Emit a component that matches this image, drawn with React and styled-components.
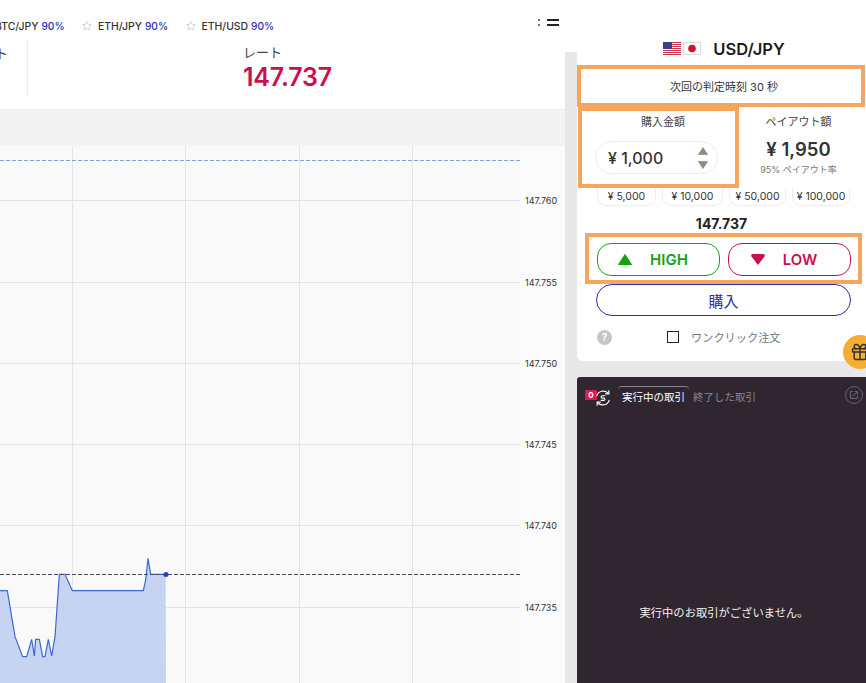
import React from 'react';
import styled, { createGlobalStyle } from 'styled-components';
import { Gift, Star } from 'lucide-react';

const GlobalStyle = createGlobalStyle`
  html, body { margin: 0; padding: 0; background: #fff; }
  body { font-family: Inter, "Noto Sans CJK JP", sans-serif; color: #2b2b2b; }
  * { box-sizing: border-box; }
`;

const ORANGE = '#f5a55c';
const BLUE = '#2a2fb0';
const GREEN = '#12a312';
const RED = '#c8114f';

const pairs = [
  { name: 'BTC/JPY', rate: '90%' },
  { name: 'ETH/JPY', rate: '90%', star: true },
  { name: 'ETH/USD', rate: '90%', star: true },
];
const chips = ['¥ 5,000', '¥ 10,000', '¥ 50,000', '¥ 100,000'];
const ticks = [
  { y: 54.5, label: '147.760' },
  { y: 136.5, label: '147.755' },
  { y: 217.5, label: '147.750' },
  { y: 298.5, label: '147.745' },
  { y: 379.5, label: '147.740' },
  { y: 461.5, label: '147.735' },
];
const vLines = [72.5, 185.5, 299.5, 412.5];

const raw = [[0,152],[22,152],[45,290],[68,350],[80,350],[95,298],[103,348],[107,298],[118,298],[128,350],[135,350],[145,298],[155,348],[165,290],[178,103],[195,103],[217,152],[430,152],[437,120],[444,55],[452,103],[497,103]];
// zoomed crop coords to svg coords (chart starts at y=146)
const pts = raw.map(([x, y]) => [x / 3, 540 + y / 3 - 146]);
const line = pts.map(p => p.join(',')).join(' ');
const area = `0,537 ${line} 166,537`;

const Page = styled.div`
  width: 866px;
  height: 683px;
  display: flex;
  overflow: hidden;
`;
const Main = styled.div`
  width: 565px;
  display: flex;
  flex-direction: column;
`;
const Ticker = styled.div`
  height: 40px;
  padding: 19px 6px 0 0;
  display: flex;
  align-items: flex-start;
  justify-content: space-between;
  overflow: hidden;
`;
const Pairs = styled.div`
  display: flex;
  margin-left: -5px;
`;
const Pair = styled.div`
  display: flex;
  align-items: center;
  height: 14px;
  font-size: 10.4px;
  font-weight: 500;
  white-space: nowrap;
  margin-right: 17.5px;
  color: #333;
  svg { margin-right: 6px; color: #b5b5b5; }
  b { font-weight: 500; font-size: 10.2px; color: ${BLUE}; margin-left: 3px; }
`;
const MenuIcons = styled.div`
  display: flex;
  align-items: center;
  gap: 7px;
`;
const Dots = styled.span`
  display: flex;
  flex-direction: column;
  gap: 3px;
  i { width: 2px; height: 2px; border-radius: 50%; background: #444; }
`;
const Bars = styled.span`
  display: flex;
  flex-direction: column;
  gap: 3px;
  i { width: 12px; height: 2px; background: #222; }
`;
const InfoRow = styled.div`
  height: 70px;
  display: flex;
  border-bottom: 1px solid #ececec;
`;
const ClippedCol = styled.div`
  width: 28px;
  height: 56px;
  border-right: 1px solid #ececec;
  display: flex;
  justify-content: flex-end;
  padding: 3px 19px 0 0;
  font-size: 13px;
  color: #444;
  white-space: nowrap;
`;
const RateCol = styled.div`
  padding: 2px 0 0 215px;
`;
const RateLabel = styled.div`
  font-size: 13px;
  line-height: 20px;
  color: #444;
`;
const RateValue = styled.div`
  font-size: 25px;
  line-height: 30px;
  font-weight: 600;
  letter-spacing: -0.2px;
  color: ${RED};
`;
const Band = styled.div`
  height: 36px;
  background: #f3f3f3;
`;
const ChartWrap = styled.div`
  flex: 1;
  background: #f9f9f9;
  svg { display: block; }
`;

const Side = styled.div`
  width: 301px;
  padding-left: 12px;
  background: linear-gradient(#fff 52px, #e8e8e8 52px);
  display: flex;
  flex-direction: column;
`;
const Panel = styled.div`
  position: relative;
  height: 361px;
  background: #fff;
  border-bottom-left-radius: 6px;
  display: flex;
  flex-direction: column;
`;
const PairHead = styled.div`
  height: 65px;
  padding: 39px 0 0 5px;
  display: flex;
  justify-content: center;
  align-items: flex-start;
  gap: 2px;
  font-size: 16.5px;
  font-weight: 600;
  line-height: 20px;
  color: #1c1c1c;
  span { margin-left: 10px; }
  svg { margin-top: 3px; }
`;
const TimerBox = styled.div`
  width: 288px;
  height: 42px;
  padding-left: 6px;
  border: 4px solid ${ORANGE};
  display: flex;
  align-items: center;
  justify-content: center;
  font-size: 11px;
  color: #333;
`;
const AmountRow = styled.div`
  display: flex;
  height: 81px;
`;
const AmountBox = styled.div`
  width: 161px;
  margin-left: 1px;
  border: 4px solid ${ORANGE};
  padding: 3px 0 0 13px;
  display: flex;
  flex-direction: column;
`;
const SmallHead = styled.div`
  font-size: 11px;
  line-height: 16px;
  text-align: center;
  color: #444;
`;
const AmountLabel = styled(SmallHead)`
  padding-right: 4px;
`;
const AmountInput = styled.div`
  margin-top: 11px;
  width: 123px;
  height: 33px;
  border: 1px solid #ececec;
  border-radius: 17px;
  display: flex;
  align-items: center;
  justify-content: space-between;
  padding: 0 9px 0 12px;
  font-size: 16px;
  font-weight: 500;
  color: #333;
`;
const Arrows = styled.span`
  display: flex;
  flex-direction: column;
  gap: 6px;
`;
const Payout = styled.div`
  flex: 1;
  padding: 7px 8px 0 0;
  display: flex;
  flex-direction: column;
  align-items: center;
`;
const PayoutValue = styled.div`
  margin-top: 8px;
  font-size: 18.5px;
  line-height: 22px;
  font-weight: 600;
  color: #333;
`;
const PayoutNote = styled.div`
  font-size: 9px;
  line-height: 14px;
  margin-top: 3px;
  color: #777;
`;
const Chips = styled.div`
  display: flex;
  gap: 6px;
  padding-left: 20px;
`;
const Chip = styled.div`
  height: 18px;
  padding: 0 6px;
  border: 1px solid #eee;
  border-top: 0;
  border-radius: 0 0 9px 9px;
  display: flex;
  align-items: center;
  justify-content: center;
  white-space: nowrap;
  font-size: 10.5px;
  color: #333;
  width: ${p => p.$w}px;
`;
const Quote = styled.div`
  margin-top: 8px;
  height: 19px;
  text-align: center;
  font-size: 14px;
  line-height: 20px;
  font-weight: 700;
  color: #222;
`;
const TradeBox = styled.div`
  margin: 0 0 0 8px;
  width: 277px;
  height: 51px;
  border: 4px solid ${ORANGE};
  display: flex;
  gap: 8px;
  padding: 6px 7px 0 8px;
`;
const TradeButton = styled.div`
  flex: 1;
  height: 33px;
  border: 1px solid ${p => p.$color};
  border-radius: 14px;
  color: ${p => p.$color};
  font-size: 15px;
  font-weight: 600;
  display: flex;
  align-items: center;
  justify-content: center;
  gap: 18px;
  padding-right: 7px;
  svg { margin-left: -4px; }
`;
const BuyButton = styled.div`
  margin: 0 15px 0 19px;
  height: 32px;
  border: 1px solid ${BLUE};
  border-radius: 16px;
  color: ${BLUE};
  font-size: 15px;
  font-weight: 400;
  display: flex;
  align-items: center;
  justify-content: center;
`;
const OneClick = styled.div`
  margin-top: 13px;
  padding-left: 20px;
  height: 16px;
  display: flex;
  align-items: center;
  font-size: 11.2px;
  color: #777;
`;
const Help = styled.span`
  width: 15px;
  height: 15px;
  border-radius: 50%;
  background: #c6c6c6;
  color: #fff;
  font-size: 10px;
  font-weight: 700;
  display: flex;
  align-items: center;
  justify-content: center;
`;
const Check = styled.span`
  width: 12px;
  height: 12px;
  margin: 0 12px 0 55px;
  border: 1.5px solid #222;
`;
const GiftBadge = styled.div`
  position: absolute;
  left: 266px;
  top: 335px;
  width: 34px;
  height: 34px;
  border-radius: 50%;
  background: #f5ae33;
  color: #333;
  display: flex;
  align-items: center;
  justify-content: center;
`;
const Dark = styled.div`
  margin-top: 16px;
  flex: 1;
  background: #2f2630;
  border-radius: 3px 0 0 0;
  display: flex;
  flex-direction: column;
  color: #fff;
`;
const DarkHead = styled.div`
  height: 34px;
  padding: 9px 0 0 8px;
  display: flex;
  align-items: flex-start;
`;
const Count = styled.span`
  width: 12px;
  height: 10px;
  margin-top: 4px;
  background: #d81b52;
  font-size: 8px;
  line-height: 10px;
  font-weight: 700;
  text-align: center;
`;
const IconSlot = styled.span`
  margin: 3px 0 0 -3px;
  height: 20px;
`;
const Tab = styled.div`
  margin-left: ${p => (p.$active ? '6px' : '0')};
  padding: 3px 4px 0;
  height: 20px;
  font-size: 10.5px;
  line-height: 15px;
  white-space: nowrap;
  color: ${p => (p.$active ? '#fff' : '#8c858d')};
  border-top: ${p => (p.$active ? '1px solid #8c858d' : '1px solid transparent')};
  border-radius: 4px 4px 0 0;
`;
const ExportIcon = styled.span`
  margin-left: auto;
  margin-right: 3px;
  width: 18px;
  height: 18px;
  border: 1px solid #6a636b;
  border-radius: 50%;
  display: flex;
  align-items: center;
  justify-content: center;
`;
const Empty = styled.div`
  flex: 1;
  padding: 129px 0 0 5px;
  display: flex;
  align-items: center;
  justify-content: center;
  font-size: 11.3px;
  color: #f2f2f2;
`;

const Chart = () => (
  <svg width="565" height="537" viewBox="0 0 565 537">
    <rect x="520" y="0" width="45" height="537" fill="#fbfbfb" />
    {vLines.map(x => <line key={x} x1={x} x2={x} y1="0" y2="537" stroke="#e4e4e4" />)}
    {ticks.map(t => <line key={t.y} x1="0" x2="520" y1={t.y} y2={t.y} stroke="#e4e4e4" />)}
    <line x1="0" x2="520" y1="14.5" y2="14.5" stroke="#7fa4cf" strokeDasharray="4 2" />
    <polygon points={area} fill="#c6d3f1" />
    <polyline points={line} fill="none" stroke="#3f68cf" strokeWidth="1.2" />
    <line x1="0" x2="520" y1="428.5" y2="428.5" stroke="#444c60" strokeDasharray="4 2" />
    <circle cx="166" cy="428.5" r="2.5" fill="#1a48c4" />
    {ticks.map(t => (
      <text key={t.label} x="525" y={t.y + 3} fontSize="9" fontWeight="400" fill="#333" fontFamily="Inter, sans-serif">{t.label}</text>
    ))}
  </svg>
);

const UsFlag = () => (
  <svg width="18" height="13" viewBox="0 0 18 13">
    <rect width="18" height="13" fill="#fff" />
    {[0, 2, 4, 6, 8, 10, 12].map(y => <rect key={y} y={y} width="18" height="1" fill="#c8354a" />)}
    <rect width="9" height="7" fill="#3c3f86" />
  </svg>
);
const JpFlag = () => (
  <svg width="18" height="13" viewBox="0 0 18 13">
    <rect x="0.5" y="0.5" width="17" height="12" fill="#fff" stroke="#ddd" />
    <circle cx="9" cy="6.5" r="3.8" fill="#d3102f" />
  </svg>
);
const Tri = ({ color, w = 14, h = 11, down }) => (
  <svg width={w} height={h} viewBox="0 0 14 11">
    <polygon points={down ? '0.5,0.5 13.5,0.5 7,10.5' : '7,0.5 13.5,10.5 0.5,10.5'} fill={color} strokeLinejoin="round" stroke={color} />
  </svg>
);
// LOW marker: rounded top corners, almost a heart
const LowMark = ({ color }) => (
  <svg width="14" height="11" viewBox="0 0 14 11">
    <path d="M2 0h10q2.5 0 1.5 2.5L7 11 .5 2.5Q-.5 0 2 0z" fill={color} />
  </svg>
);
const SwapIcon = () => (
  <svg width="18" height="18" viewBox="0 0 20 20" fill="none" stroke="#fff" strokeWidth="1.3">
    <path d="M3 8a7.500 7.500 0 0 1 13-3" />
    <path d="M16.500 1.500V5.500h-4" />
    <path d="M17 12a7.500 7.500 0 0 1-13 3" />
    <path d="M3.500 18.500V14.500h4" />
    <path d="M12.500 7.500H9.200a1.300 1.300 0 0 0 0 2.600h1.600a1.300 1.300 0 0 1 0 2.600H7.500" />
  </svg>
);
const ExportGlyph = () => (
  <svg width="10" height="10" viewBox="0 0 10 10" fill="none" stroke="#6a636b" strokeWidth="1">
    <path d="M4 1.500H1.500v7h7V6" />
    <path d="M3.500 6.500 8.500 1.500M5.500 1.500h3v3" />
  </svg>
);

export default function App() {
  return (
    <Page>
      <GlobalStyle />
      <Main>
        <Ticker>
          <Pairs>
            {pairs.map(p => (
              <Pair key={p.name}>
                {p.star && <Star size={10} strokeWidth={1.5} />}
                {p.name}<b>{p.rate}</b>
              </Pair>
            ))}
          </Pairs>
          <MenuIcons>
            <Dots><i /><i /></Dots>
            <Bars><i /><i /></Bars>
          </MenuIcons>
        </Ticker>
        <InfoRow>
          <ClippedCol>ペイアウト</ClippedCol>
          <RateCol>
            <RateLabel>レート</RateLabel>
            <RateValue>147.737</RateValue>
          </RateCol>
        </InfoRow>
        <Band />
        <ChartWrap><Chart /></ChartWrap>
      </Main>
      <Side>
        <Panel>
          <PairHead>
            <UsFlag /><JpFlag /><span>USD/JPY</span>
          </PairHead>
          <TimerBox>次回の判定時刻 30 秒</TimerBox>
          <AmountRow>
            <AmountBox>
              <AmountLabel>購入金額</AmountLabel>
              <AmountInput>
                ¥ 1,000
                <Arrows>
                  <Tri color="#8a8f7a" w={10} h={8} />
                  <Tri color="#8a8f7a" w={10} h={8} down />
                </Arrows>
              </AmountInput>
            </AmountBox>
            <Payout>
              <SmallHead>ペイアウト額</SmallHead>
              <PayoutValue>¥ 1,950</PayoutValue>
              <PayoutNote>95% ペイアウト率</PayoutNote>
            </Payout>
          </AmountRow>
          <Chips>
            {chips.map((c, i) => <Chip key={c} $w={[59, 61, 57, 58][i]}>{c}</Chip>)}
          </Chips>
          <Quote>147.737</Quote>
          <TradeBox>
            <TradeButton $color={GREEN}><Tri color={GREEN} />HIGH</TradeButton>
            <TradeButton $color={RED}><LowMark color={RED} />LOW</TradeButton>
          </TradeBox>
          <BuyButton>購入</BuyButton>
          <OneClick>
            <Help>?</Help>
            <Check />
            ワンクリック注文
          </OneClick>
          <GiftBadge><Gift size={20} strokeWidth={1.8} /></GiftBadge>
        </Panel>
        <Dark>
          <DarkHead>
            <Count>0</Count>
            <IconSlot><SwapIcon /></IconSlot>
            <Tab $active>実行中の取引</Tab>
            <Tab>終了した取引</Tab>
            <ExportIcon><ExportGlyph /></ExportIcon>
          </DarkHead>
          <Empty>実行中のお取引がございません。</Empty>
        </Dark>
      </Side>
    </Page>
  );
}
